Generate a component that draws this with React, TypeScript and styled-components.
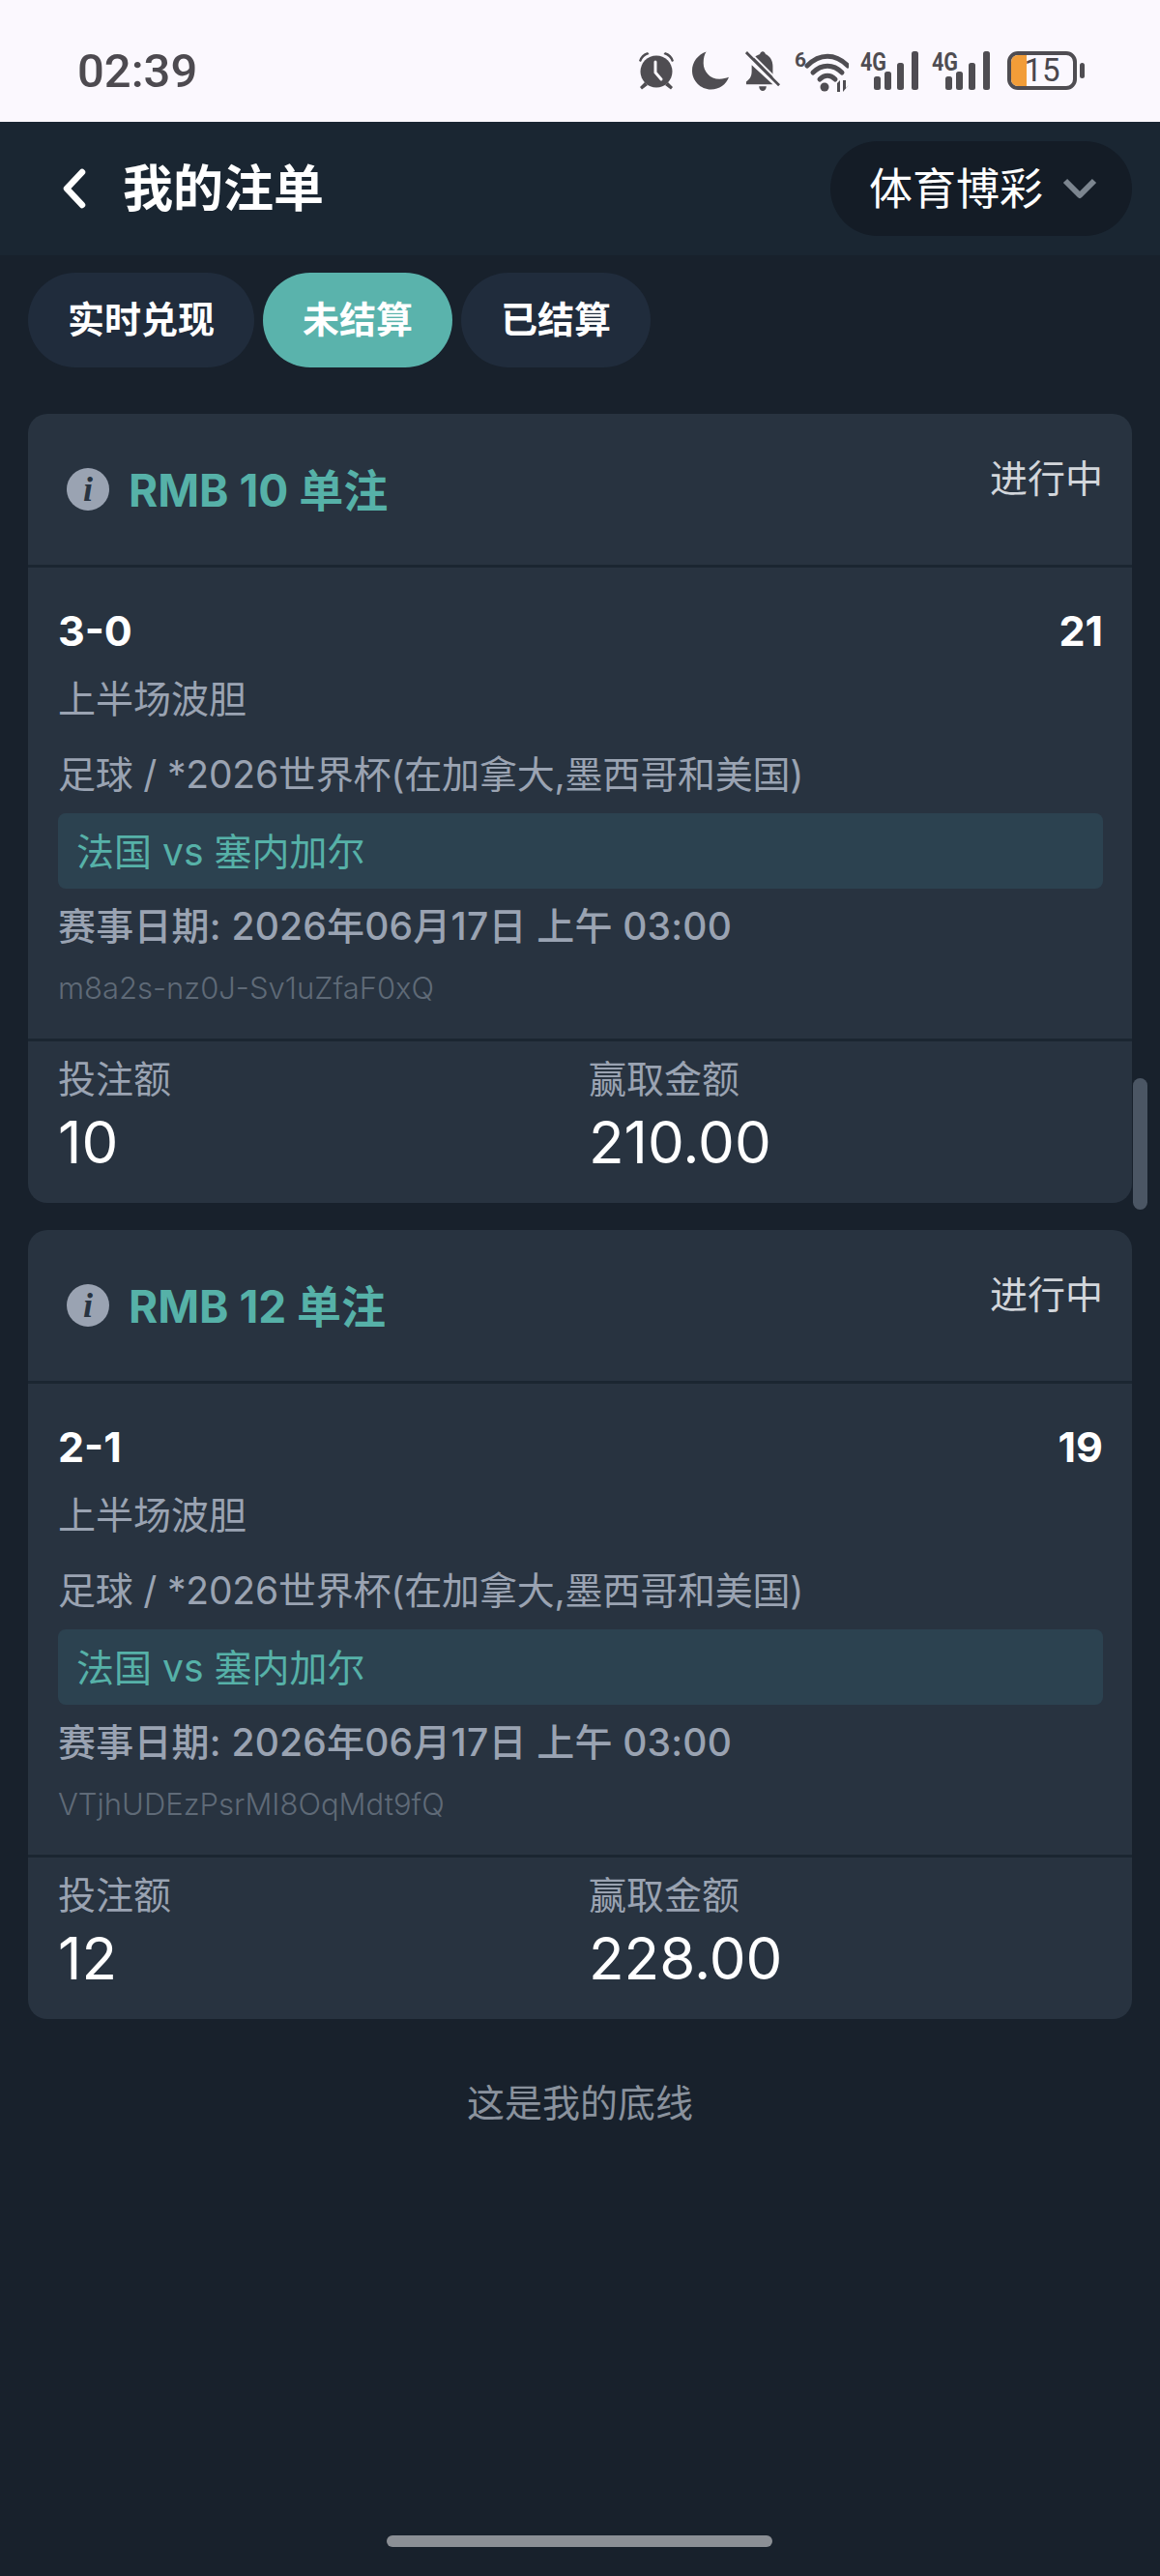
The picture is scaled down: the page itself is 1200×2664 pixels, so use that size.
import React from 'react'
import styled, { createGlobalStyle } from 'styled-components'

const bets = [
  { stake: '10', title: 'RMB 10 单注', pick: '3-0', odds: '21', ticket: 'm8a2s-nz0J-Sv1uZfaF0xQ', win: '210.00' },
  { stake: '12', title: 'RMB 12 单注', pick: '2-1', odds: '19', ticket: 'VTjhUDEzPsrMI8OqMdt9fQ', win: '228.00' },
]

function Signal() {
  return (
    <SignalIcon width="60" height="54" viewBox="0 -14 60 54" fill="#4f4d52">
      <text x="0" y="20" fontFamily="Roboto" fontWeight="700" fontSize="25" textLength="27" lengthAdjust="spacingAndGlyphs">4G</text>
      <rect x="14" y="26" width="7" height="14" rx="2.5" />
      <rect x="25" y="21" width="7" height="19" rx="2.5" />
      <rect x="38" y="12" width="7" height="28" rx="2.5" />
      <rect x="53" y="0" width="7" height="40" rx="2.5" />
    </SignalIcon>
  )
}

export default function App() {
  return (
    <Page>
      <GlobalStyle />
      <StatusBar>
        <Clock>02:39</Clock>
        <StatusIcons>
          <svg width="40" height="40" viewBox="0 0 40 40" fill="#4f4d52">
            <circle cx="20" cy="21" r="16.5" />
            <path d="M2 10 Q4 3 11 1 L12.5 3 Q6 5 4 11Z M38 10 Q36 3 29 1 L27.5 3 Q34 5 36 11Z" />
            <path d="M8 32 L3 37 L5 39.5 L11 35Z M32 32 L37 37 L35 39.5 L29 35Z" />
            <path d="M19 11 V22 L25 29" fill="none" stroke="#fbf8fe" strokeWidth="3" strokeLinecap="round" />
          </svg>
          <MoonIcon width="38" height="40" viewBox="0 0 39 40" fill="#4f4d52">
            <path d="M15 0 C6 3 0 11 0 20 C0 31 9 40 20 40 C29 40 36 35 39 27 C36 28 33 29 29 29 C19 29 12 21 12 12 C12 7 13 3 15 0Z" />
          </MoonIcon>
          <BellIcon width="36" height="42" viewBox="0 0 38 44" fill="#4f4d52">
            <path d="M19 0 C17.5 0 16 1.5 16 3 C12.5 4 10 6 8.5 8.5 L30 30 V16 C30 10 27 5 22 3 C22 1.5 20.5 0 19 0Z" />
            <path d="M7 15 L30 36 H1 V33 C4 31 7 28 7 22Z" />
            <path d="M15 38 H23 C23 41 21 43 19 43 C17 43 15 41 15 38Z" />
            <path d="M1 1 L37 37" stroke="#4f4d52" strokeWidth="3" />
            <path d="M4 0 L38 34" stroke="#fbf8fe" strokeWidth="2" />
          </BellIcon>
          <WifiIcon width="56" height="56" viewBox="0 -14 56 56" fill="none">
            <text x="0" y="16" fontFamily="Roboto" fontWeight="700" fontSize="21" fill="#4f4d52">6</text>
            <path d="M13 15 C26 2 42 2 55 15" stroke="#4f4d52" strokeWidth="5" strokeLinecap="round" />
            <path d="M19 22 C28 13 40 13 49 22" stroke="#4f4d52" strokeWidth="5" strokeLinecap="round" />
            <path d="M26 29 C31 24 37 24 42 29" stroke="#4f4d52" strokeWidth="5" strokeLinecap="round" />
            <circle cx="31" cy="37" r="4.5" fill="#4f4d52" />
            <path d="M44 33 L47 30 V42 H44Z M50 30 H53 V38 L56 35 L50 42Z" fill="#4f4d52" />
          </WifiIcon>
          <Signal />
          <Signal />
          <Battery>
            <BatteryShell>
              <BatteryFill />
              <BatteryText>15</BatteryText>
            </BatteryShell>
            <BatteryNub />
          </Battery>
        </StatusIcons>
      </StatusBar>

      <Header>
        <BackGroup>
          <svg width="30" height="44" viewBox="0 0 30 44" fill="none">
            <path d="M23 5 L7 22 L23 39" stroke="#fff" strokeWidth="6.5" strokeLinecap="round" strokeLinejoin="round" />
          </svg>
          <Title>我的注单</Title>
        </BackGroup>
        <Dropdown>
          <DropdownText>体育博彩</DropdownText>
          <svg width="36" height="24" viewBox="0 0 36 24" fill="none">
            <path d="M3 4 L18 19 L33 4" stroke="#7c858f" strokeWidth="6" strokeLinejoin="round" />
          </svg>
        </Dropdown>
      </Header>

      <Tabs>
        <Tab>实时兑现</Tab>
        <Tab $active>未结算</Tab>
        <Tab>已结算</Tab>
      </Tabs>

      <List>
        {bets.map((bet) => (
          <Card key={bet.ticket}>
            <CardHead>
              <HeadLeft>
                <InfoBadge>i</InfoBadge>
                <BetTitle>{bet.title}</BetTitle>
              </HeadLeft>
              <BetStatus>进行中</BetStatus>
            </CardHead>
            <CardBody>
              <PickRow>
                <span>{bet.pick}</span>
                <span>{bet.odds}</span>
              </PickRow>
              <Market>上半场波胆</Market>
              <League>足球 / *2026世界杯(在加拿大,墨西哥和美国)</League>
              <Match>法国 vs 塞内加尔</Match>
              <MatchDate>赛事日期: 2026年06月17日 上午 03:00</MatchDate>
              <Ticket>{bet.ticket}</Ticket>
            </CardBody>
            <CardFoot>
              <div>
                <FootLabel>投注额</FootLabel>
                <FootValue>{bet.stake}</FootValue>
              </div>
              <div>
                <FootLabel>赢取金额</FootLabel>
                <FootValue>{bet.win}</FootValue>
              </div>
            </CardFoot>
          </Card>
        ))}
      </List>

      <EndNote>这是我的底线</EndNote>
      <ScrollThumb />
      <HomeBar />
    </Page>
  )
}

const GlobalStyle = createGlobalStyle`
  html, body {
    margin: 0;
    padding: 0;
    background: #18212c;
  }
  * {
    box-sizing: border-box;
  }
`

const sans = `Inter, "Noto Sans CJK SC", sans-serif`

const Page = styled.div`
  width: 1200px;
  height: 2664px;
  position: relative;
  overflow: hidden;
  display: flex;
  flex-direction: column;
  background: #18212c;
  font-family: ${sans};
`

const StatusBar = styled.div`
  height: 126px;
  padding: 20px 78px 0 80px;
  display: flex;
  align-items: center;
  justify-content: space-between;
  background: #fbf8fe;
`

const Clock = styled.div`
  font-family: Roboto, sans-serif;
  font-size: 49px;
  font-weight: 500;
  color: #4d4a50;
`

const StatusIcons = styled.div`
  height: 40px;
  display: flex;
  align-items: flex-start;
  gap: 14px;
`

const MoonIcon = styled.svg`
  margin-left: 3px;
`

const BellIcon = styled.svg`
  margin-left: 3px;
`

const WifiIcon = styled.svg`
  margin: -14px -2px 0 1px;
`

const SignalIcon = styled.svg`
  margin-top: -14px;
`

const Battery = styled.div`
  display: flex;
  align-items: center;
  gap: 3px;
  margin-left: 4px;
`

const BatteryShell = styled.div`
  width: 72px;
  height: 40px;
  position: relative;
  overflow: hidden;
  display: flex;
  align-items: center;
  justify-content: center;
  border: 4px solid #4f4d52;
  border-radius: 11px;
`

const BatteryFill = styled.div`
  position: absolute;
  left: 0;
  top: 0;
  bottom: 0;
  width: 16px;
  background: #f29d38;
`

const BatteryText = styled.span`
  position: relative;
  font-family: Roboto, sans-serif;
  font-size: 33px;
  line-height: 32px;
  color: #4a474d;
`

const BatteryNub = styled.div`
  width: 5px;
  height: 16px;
  border-radius: 3px;
  background: #4f4d52;
`

const Header = styled.div`
  height: 138px;
  padding: 0 29px 0 62px;
  display: flex;
  align-items: center;
  justify-content: space-between;
  background: #1a2632;
`

const BackGroup = styled.div`
  display: flex;
  align-items: center;
  gap: 35px;
`

const Title = styled.div`
  padding-bottom: 7px;
  font-size: 52px;
  font-weight: 700;
  color: #fff;
`

const Dropdown = styled.div`
  width: 312px;
  height: 98px;
  padding: 0 36px 0 40px;
  display: flex;
  align-items: center;
  justify-content: space-between;
  border-radius: 49px;
  background: #141c26;
  color: #fff;
  font-size: 45px;
`

const DropdownText = styled.span`
  padding-bottom: 6px;
`

const Tabs = styled.div`
  padding: 18px 29px 0;
  display: flex;
  gap: 9px;
`

const Tab = styled.div<{ $active?: boolean }>`
  height: 98px;
  padding: 0 41px 7px;
  display: flex;
  align-items: center;
  border-radius: 49px;
  background: ${(p) => (p.$active ? '#5ab3ac' : '#202c3c')};
  color: #fff;
  font-size: 38px;
  font-weight: 700;
`

const List = styled.div`
  padding: 48px 29px 0;
  display: flex;
  flex-direction: column;
  gap: 28px;
`

const Card = styled.div`
  border-radius: 20px;
  overflow: hidden;
  background: #283340;
`

const CardHead = styled.div`
  height: 159px;
  padding: 46px 30px 0 40px;
  display: flex;
  align-items: flex-start;
  justify-content: space-between;
  border-bottom: 3px solid #1b2631;
`

const HeadLeft = styled.div`
  display: flex;
  align-items: center;
  gap: 20px;
`

const InfoBadge = styled.div`
  width: 44px;
  height: 44px;
  display: flex;
  align-items: center;
  justify-content: center;
  border-radius: 50%;
  background: #9aa3b2;
  color: #283340;
  font-family: "Liberation Serif", serif;
  font-style: italic;
  font-weight: 700;
  font-size: 36px;
`

const BetTitle = styled.div`
  padding-top: 3px;
  font-size: 46px;
  font-weight: 700;
  line-height: 60px;
  color: #56b1a8;
`

const BetStatus = styled.div`
  margin-top: -4px;
  font-size: 39px;
  line-height: 50px;
  color: #d2d6db;
`

const CardBody = styled.div`
  height: 490px;
  padding: 40px 30px 0 31px;
  display: flex;
  flex-direction: column;
  border-bottom: 3px solid #1b2631;
`

const PickRow = styled.div`
  display: flex;
  justify-content: space-between;
  font-size: 43px;
  font-weight: 700;
  line-height: 50px;
  color: #fff;
`

const Market = styled.div`
  margin-top: 21px;
  font-size: 39px;
  line-height: 50px;
  color: #9aa3b2;
`

const League = styled.div`
  margin-top: 28px;
  font-size: 39px;
  line-height: 50px;
  letter-spacing: -0.2px;
  color: #9aa3b2;
`

const Match = styled.div`
  margin-top: 15px;
  height: 78px;
  padding: 0 19px 4px;
  display: flex;
  align-items: center;
  border-radius: 8px;
  background: #2c4250;
  color: #56b1a8;
  font-size: 39px;
`

const MatchDate = styled.div`
  margin-top: 14px;
  font-size: 39px;
  line-height: 50px;
  font-weight: 500;
  letter-spacing: 0.2px;
  color: #9aa3b2;
`

const Ticket = styled.div`
  margin-top: 19px;
  font-size: 31px;
  font-weight: 300;
  line-height: 40px;
  color: #5f6a77;
`

const CardFoot = styled.div`
  height: 167px;
  padding: 14px 31px 0;
  display: grid;
  grid-template-columns: 549px 1fr;
`

const FootLabel = styled.div`
  font-size: 39px;
  line-height: 50px;
  color: #9aa3b2;
`

const FootValue = styled.div`
  margin-top: 5px;
  font-size: 60px;
  font-weight: 400;
  line-height: 70px;
  color: #fff;
`

const EndNote = styled.div`
  margin-top: 62px;
  text-align: center;
  font-size: 39px;
  line-height: 50px;
  color: #8a929d;
`

const ScrollThumb = styled.div`
  position: absolute;
  left: 1172px;
  top: 1115px;
  width: 15px;
  height: 136px;
  border-radius: 8px;
  background: #4b5664;
`

const HomeBar = styled.div`
  position: absolute;
  left: 400px;
  bottom: 30px;
  width: 399px;
  height: 12px;
  border-radius: 6px;
  background: #8b8f95;
`
